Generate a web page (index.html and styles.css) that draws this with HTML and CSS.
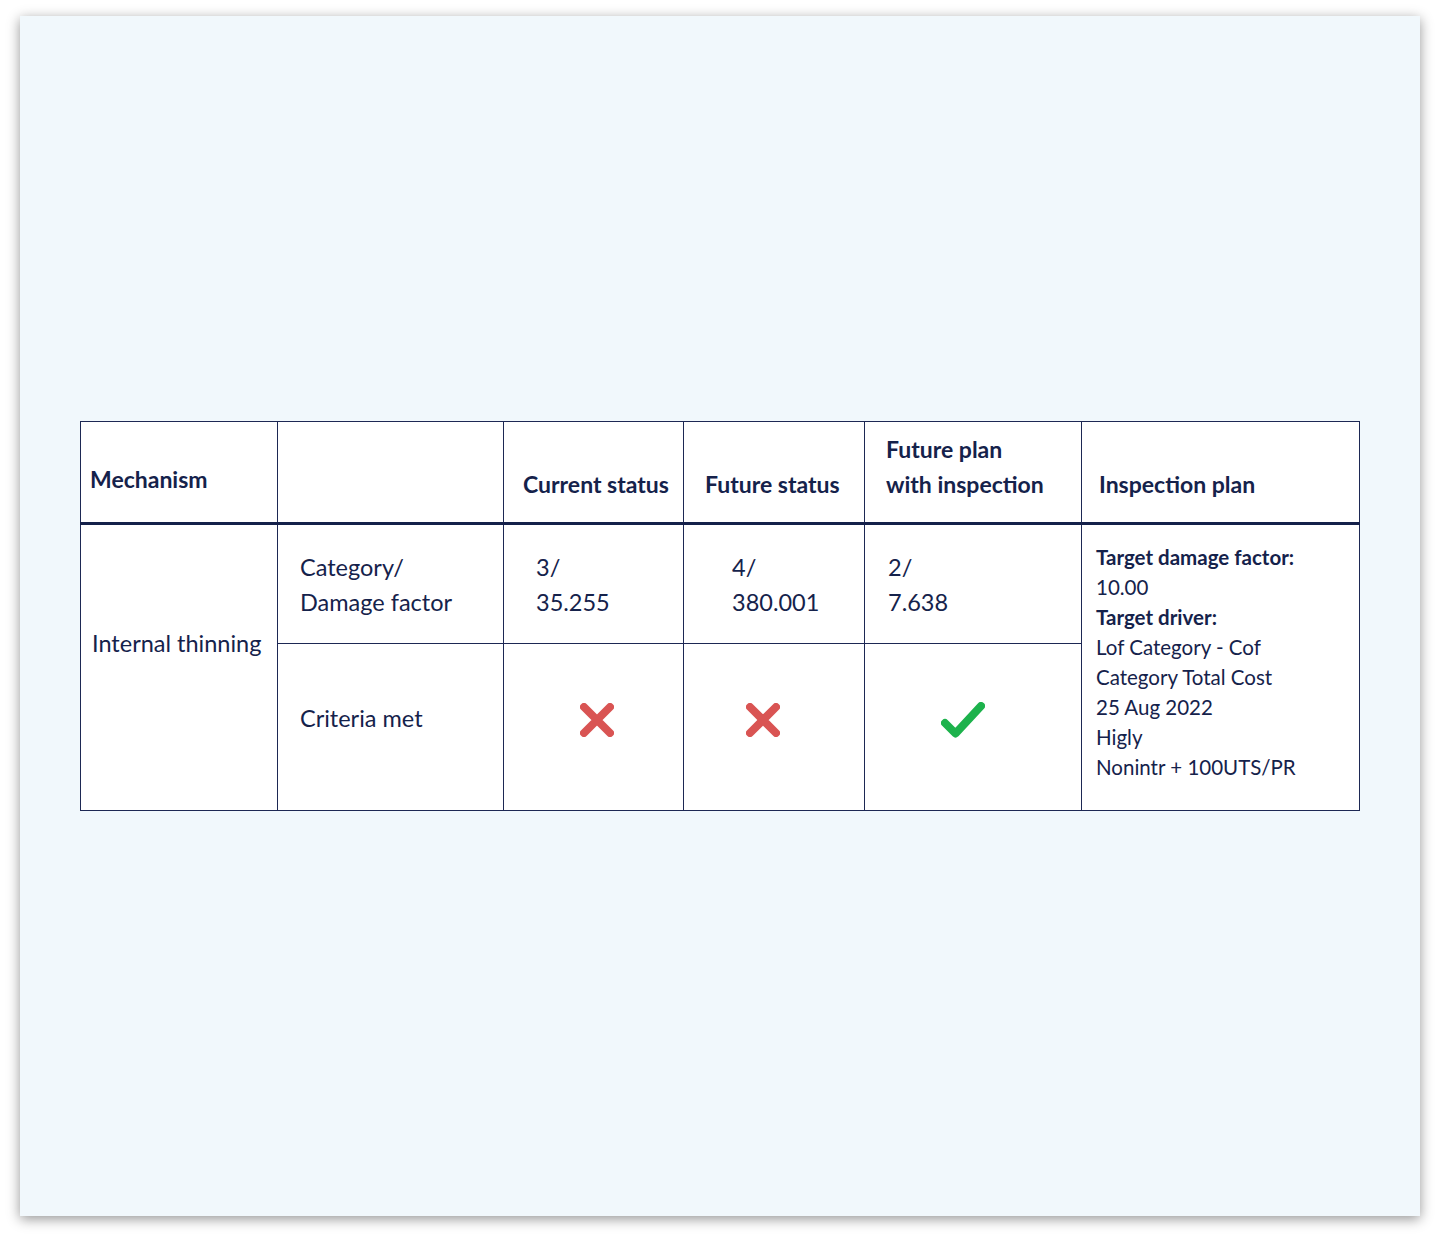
FILE: index.html
```html
<!DOCTYPE html>
<html lang="en">
<head>
<meta charset="utf-8">
<title>Inspection summary</title>
<link rel="stylesheet" href="styles.css">
</head>
<body>
<div class="card">
  <table class="grid">
    <colgroup>
      <col class="c1"><col class="c2"><col class="c3"><col class="c4"><col class="c5"><col class="c6">
    </colgroup>
    <thead>
      <tr class="rh">
        <th class="h h-mech">Mechanism</th>
        <th class="h"></th>
        <th class="h h-cur">Current status</th>
        <th class="h h-fut">Future status</th>
        <th class="h h-plan">Future plan<br>with inspection</th>
        <th class="h h-insp">Inspection plan</th>
      </tr>
    </thead>
    <tbody>
      <tr class="r1">
        <td class="mech" rowspan="2">Internal thinning</td>
        <td class="lbl">Category/<br>Damage factor</td>
        <td class="val v-cur">3/<br>35.255</td>
        <td class="val v-fut">4/<br>380.001</td>
        <td class="val v-plan">2/<br>7.638</td>
        <td class="insp" rowspan="2">
          <div class="b">Target damage factor:</div>
          <div>10.00</div>
          <div class="b">Target driver:</div>
          <div>Lof Category - Cof</div>
          <div>Category Total Cost</div>
          <div>25 Aug 2022</div>
          <div>Higly</div>
          <div>Nonintr + 100UTS/PR</div>
        </td>
      </tr>
      <tr class="r2">
        <td class="lbl">Criteria met</td>
        <td class="ic ic-cur"><svg width="34" height="34" viewBox="0 0 34 34"><path d="M4 4 L30 30 M30 4 L4 30" stroke="#d95453" stroke-width="8" stroke-linecap="round" fill="none"/></svg></td>
        <td class="ic ic-fut"><svg width="34" height="34" viewBox="0 0 34 34"><path d="M4 4 L30 30 M30 4 L4 30" stroke="#d95453" stroke-width="8" stroke-linecap="round" fill="none"/></svg></td>
        <td class="ic ic-plan"><svg width="44" height="36" viewBox="0 0 44 36"><path d="M4 21 L14.5 31.5 L40 4" stroke="#1db24c" stroke-width="8" stroke-linecap="round" stroke-linejoin="round" fill="none"/></svg></td>
      </tr>
    </tbody>
  </table>
</div>
</body>
</html>
```

FILE: styles.css
```css
html, body {
  margin: 0;
  padding: 0;
  background: #ffffff;
}
body {
  padding: 16px 20px 24px 20px;
  font-family: "Lato", "Noto Sans", sans-serif;
  color: #15224b;
}
.card {
  width: 1400px;
  height: 1200px;
  background: #f1f8fc;
  box-shadow: 0 3px 12px rgba(0, 0, 0, 0.42);
  display: flex;
  align-items: center;
  justify-content: center;
}
.grid {
  border-collapse: collapse;
  table-layout: fixed;
  width: 1279px;
  background: #ffffff;
  border: 1px solid #1d2854;
}
.c1 { width: 197px; }
.c2 { width: 226px; }
.c3 { width: 180px; }
.c4 { width: 181px; }
.c5 { width: 217px; }
.c6 { width: 278px; }
.grid th, .grid td {
  border: 1px solid #1d2854;
  padding: 0;
  text-align: left;
}
.rh { height: 102px; }
.r1 { height: 120px; }
.r2 { height: 167px; }
.h {
  vertical-align: bottom;
  font-size: 23px;
  font-weight: 700;
  line-height: 35px;
  padding-bottom: 20px !important;
  border-bottom: 3px solid #14214a !important;
}
.h-mech { padding-left: 9px !important; padding-bottom: 25px !important; }
.h-cur { padding-left: 19px !important; }
.h-fut { padding-left: 21px !important; }
.h-plan { padding-left: 21px !important; }
.h-insp { padding-left: 17px !important; }

.mech {
  vertical-align: top;
  font-size: 23.5px;
  line-height: 35px;
  padding: 101px 0 0 11px !important;
}
.lbl, .val {
  font-size: 23.5px;
  line-height: 35px;
  vertical-align: middle;
}
.lbl { padding-left: 22px !important; }
.r1 .lbl, .r1 .val { padding-top: 2px !important; }
.r2 .lbl { padding-bottom: 18px !important; }
.v-cur { padding-left: 32px !important; }
.v-fut { padding-left: 48px !important; }
.v-plan { padding-left: 23px !important; }
.ic {
  vertical-align: middle;
  padding-bottom: 15px !important;
}
.ic svg { display: block; }
.ic-cur svg { margin-left: 76px; }
.ic-fut svg { margin-left: 62px; }
.ic-plan svg { margin-left: 76px; }
.insp {
  vertical-align: top;
  font-size: 20.5px;
  line-height: 30px;
  padding: 17px 0 0 14px !important;
}
.insp .b { font-weight: 700; }
```
